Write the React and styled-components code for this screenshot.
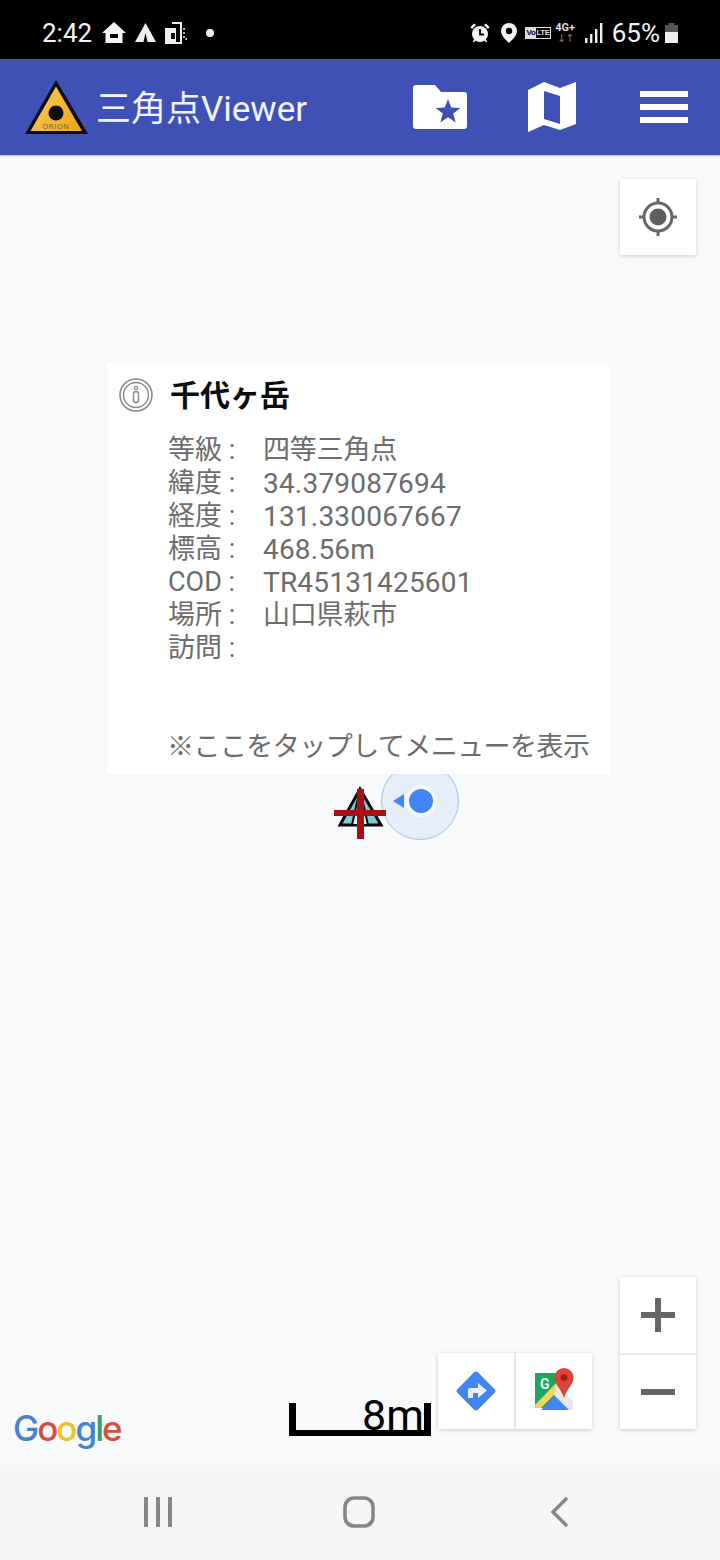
import styled, { createGlobalStyle } from 'styled-components';

const GlobalStyle = createGlobalStyle`
  html, body {
    margin: 0;
    padding: 0;
    width: 720px;
    height: 1560px;
    overflow: hidden;
    background: #f8f9fa;
    font-family: Roboto, "Noto Sans CJK JP", sans-serif;
  }
`;

const Screen = styled.div`
  width: 720px;
  height: 1560px;
  display: flex;
  flex-direction: column;
`;

/* ---------- status bar ---------- */

const StatusBar = styled.div`
  height: 59px;
  flex: none;
  background: #000;
  color: #f4f4f4;
  display: flex;
  align-items: center;
  justify-content: space-between;
  padding: 14px 42px 8px 42px;
  box-sizing: border-box;
  font-size: 26px;
`;

const StatusGroup = styled.div`
  display: flex;
  align-items: center;
`;

const StatusGap = styled.span`
  width: ${(p) => p.$w}px;
  flex: none;
`;

const StatusText = styled.span`
  line-height: 30px;
`;

const HomeIcon = () => (
  <svg width="24" height="22" viewBox="0 0 24 22">
    <path d="M12 0 L24 11 H20.5 V21 H3.5 V11 H0 Z" fill="#f4f4f4" />
    <rect x="8" y="12" width="8" height="4" fill="#000" />
  </svg>
);

const TentIcon = () => (
  <svg width="21" height="19" viewBox="0 0 21 19">
    <path d="M10.5 0 L21 19 H12.5 L10.5 10 L8.5 19 H0 Z" fill="#f0f0f0" />
  </svg>
);

const RotateIcon = () => (
  <svg width="24" height="24" viewBox="0 0 24 24" fill="none" stroke="#eee" strokeWidth="2">
    <path d="M8 2 H17 V22 H11" />
    <path d="M2 8 H11 V22 H2 Z" fill="#eee" />
    <path d="M7 12 H11 V18 H7 Z" fill="#000" stroke="none" />
    <path d="M20 7 V19 M22 17 L23 21" strokeDasharray="2 2" strokeWidth="1.5" />
  </svg>
);

const AlarmIcon = () => (
  <svg width="20" height="20" viewBox="0 0 20 20">
    <circle cx="10" cy="11" r="8" fill="#f4f4f4" />
    <path d="M0.5 4 L4 0.5 L6 2 L2 6 Z M19.5 4 L16 0.5 L14 2 L18 6 Z M3 18 L5 16 L6 17 L4 19.5 Z M17 18 L15 16 L14 17 L16 19.5 Z" fill="#f4f4f4" />
    <path d="M10 6 V11.5 H14" fill="none" stroke="#000" strokeWidth="1.8" />
  </svg>
);

const PinIcon = () => (
  <svg width="16" height="20" viewBox="0 0 16 20">
    <path d="M8 0 A8 8 0 0 1 16 8 C16 13 11 17 8 20 C5 17 0 13 0 8 A8 8 0 0 1 8 0 Z" fill="#f4f4f4" />
    <circle cx="8" cy="8" r="3.2" fill="#000" />
  </svg>
);

const VolteBadge = styled.span`
  height: 10px;
  border: 1px solid #ddd;
  display: flex;
  align-items: center;
  font: 700 8px/10px "Liberation Sans", sans-serif;
  letter-spacing: -0.4px;
  color: #ddd;
  white-space: nowrap;
`;

const VolteInverse = styled.span`
  background: #ddd;
  color: #000;
  padding: 0 1px;
`;

const NetworkType = styled.span`
  display: flex;
  flex-direction: column;
  align-items: center;
  width: 21px;
  font: 700 11px/12px Roboto, sans-serif;
  color: #ddd;
`;

const NetworkArrows = styled.span`
  font: 400 11px/9px "DejaVu Sans", sans-serif;
  letter-spacing: -1px;
  color: #777;
`;

const SignalIcon = () => (
  <svg width="18" height="20" viewBox="0 0 18 20" fill="#f0f0f0">
    <rect x="0" y="15" width="2.4" height="5" />
    <rect x="5" y="11" width="2.4" height="9" />
    <rect x="10" y="6" width="2.4" height="14" />
    <rect x="15" y="0" width="2.4" height="20" />
  </svg>
);

const BatteryIcon = () => (
  <svg width="13" height="20" viewBox="0 0 13 20">
    <path d="M3.5 0 H9.5 V2 H13 V20 H0 V2 H3.5 Z" fill="#555" />
    <path d="M0 9 H13 V20 H0 Z" fill="#eee" />
  </svg>
);

/* ---------- app bar ---------- */

const AppBar = styled.header`
  height: 96px;
  flex: none;
  background: #3f51b5;
  box-shadow: 0 1px 0 #c3cbea, 0 2px 1px #eceef4;
  box-sizing: border-box;
  display: flex;
  align-items: center;
  padding: 0 32px 0 24px;
  position: relative;
  z-index: 1;
`;

const Brand = styled.div`
  display: flex;
  align-items: center;
  gap: 8px;
  flex: 1;
`;

const Title = styled.h1`
  margin: 5px 0 0 -1px;
  font-size: 35px;
  font-weight: 400;
  line-height: 44px;
  color: #f2f5ff;
  font-family: Roboto, "Noto Sans CJK JP", sans-serif;
`;

const AppActions = styled.div`
  display: flex;
  align-items: center;
  gap: 64px;
`;

const Logo = () => (
  <svg width="65" height="56" viewBox="0 0 65 56" style={{ flex: 'none', marginTop: 2 }}>
    <defs>
      <linearGradient id="logoFill" x1="0" y1="0" x2="1" y2="0.6">
        <stop offset="0" stopColor="#fcce5a" />
        <stop offset="1" stopColor="#eeaa20" />
      </linearGradient>
    </defs>
    <path d="M32 0 L64 54 H1 Z" fill="#0c0c14" />
    <path d="M32 6.5 L58 51 H6.5 Z" fill="url(#logoFill)" />
    <circle cx="32" cy="33" r="7.5" fill="#0a0a10" />
    <text x="32" y="49" textAnchor="middle" fontSize="7" letterSpacing="0.8" fill="#6a6040" fontFamily="Liberation Sans, sans-serif">ORION</text>
  </svg>
);

const FolderSvg = styled.svg`
  margin-right: -3px;
`;

const FolderStarIcon = () => (
  <FolderSvg width="54" height="44" viewBox="0 0 54 44">
    <path d="M3 0 H22 L28 7 H51 A3 3 0 0 1 54 10 V41 A3 3 0 0 1 51 44 H3 A3 3 0 0 1 0 41 V3 A3 3 0 0 1 3 0 Z" fill="#fff" />
    <path d="M35 14 L38.2 22.6 L47.4 22.9 L40.2 28.6 L42.7 37.4 L35 32.3 L27.3 37.4 L29.8 28.6 L22.6 22.9 L31.8 22.6 Z" fill="#3f51b5" />
  </FolderSvg>
);

const FoldedMapIcon = () => (
  <svg width="48" height="50" viewBox="0 0 48 50">
    <path d="M0 8 L16 0 L32 6 L48 0 V42 L32 48 L16 43 L0 50 Z" fill="#fff" />
    <path d="M16 9 L32 14 V42 L16 37 Z" fill="#3f51b5" />
  </svg>
);

const Hamburger = styled.div`
  width: 48px;
  height: 32px;
  display: flex;
  flex-direction: column;
  justify-content: space-between;
`;

const HamburgerBar = styled.span`
  height: 6px;
  background: #fff;
`;

/* ---------- map ---------- */

const MapArea = styled.main`
  flex: 1;
  position: relative;
  background: #f8f9fa;
`;

const ControlButton = styled.button`
  width: 76px;
  height: 76px;
  padding: 0;
  border: none;
  background: #fff;
  display: flex;
  align-items: center;
  justify-content: center;
`;

const LocateButton = styled(ControlButton)`
  position: absolute;
  top: 24px;
  right: 24px;
  border-radius: 2px;
  box-shadow: 0 1px 4px rgba(0, 0, 0, 0.18);
`;

const ZoomStack = styled.div`
  position: absolute;
  right: 24px;
  bottom: 36px;
  display: flex;
  flex-direction: column;
  border-radius: 2px;
  box-shadow: 0 1px 4px rgba(0, 0, 0, 0.18);
  & > button + button {
    border-top: 2px solid #e8e8e8;
  }
`;

const ToolbarStack = styled.div`
  position: absolute;
  right: 128px;
  bottom: 36px;
  display: flex;
  border-radius: 2px;
  box-shadow: 0 1px 4px rgba(0, 0, 0, 0.18);
  & > button + button {
    border-left: 2px solid #e8e8e8;
    width: 78px;
  }
`;

const InfoWindow = styled.section`
  position: absolute;
  left: 108px;
  top: 210px;
  width: 502px;
  height: 409px;
  box-sizing: border-box;
  background: #fff;
  padding: 12px 20px 0 11px;
  display: flex;
  flex-direction: column;
`;

const InfoHeader = styled.div`
  display: flex;
  align-items: center;
  gap: 17px;
  height: 36px;
`;

const InfoTitle = styled.h2`
  margin: 0 0 5px;
  font-size: 30px;
  line-height: 36px;
  font-weight: 700;
  color: #0a0a0a;
  font-family: "Noto Sans CJK JP", sans-serif;
`;

const InfoRows = styled.dl`
  margin: 21px 0 0 49px;
  display: grid;
  grid-template-columns: 95px 1fr;
  grid-auto-rows: 33px;
  line-height: 33px;
  color: #6c6c6c;
`;

const InfoLabel = styled.dt`
  margin: 0;
  font-size: 27px;
  white-space: nowrap;
`;

const InfoValue = styled.dd`
  margin: 0;
  white-space: nowrap;
  font-size: ${(p) => (p.$cjk ? 27 : 28)}px;
  letter-spacing: ${(p) => (p.$cjk ? -0.2 : 0.2)}px;
`;

const InfoHint = styled.p`
  margin: 66px 0 0 48px;
  font-size: 27px;
  line-height: 33px;
  color: #6c6c6c;
  white-space: nowrap;
  letter-spacing: -0.55px;
`;

const InfoCircle = () => (
  <svg width="34" height="34" viewBox="0 0 34 34" fill="none" stroke="#8a8a8a">
    <circle cx="17" cy="17" r="16" strokeWidth="1.6" />
    <circle cx="17" cy="17" r="12.5" strokeWidth="1.4" />
    <rect x="14.5" y="13.5" width="5" height="11" rx="2.5" strokeWidth="1.5" />
    <circle cx="17" cy="10" r="1.6" strokeWidth="1.4" />
  </svg>
);

const StationMarker = styled.svg`
  position: absolute;
  left: 332px;
  top: 631px;
`;

const AccuracyCircle = styled.div`
  position: absolute;
  left: 381px;
  top: 607px;
  width: 78px;
  height: 78px;
  box-sizing: border-box;
  border-radius: 50%;
  background: rgba(66, 133, 244, 0.1);
  border: 1px solid #9cc3e4;
  clip-path: inset(12px 0 0 0);
`;

const LocationDot = styled.div`
  position: absolute;
  left: 405px;
  top: 630px;
  width: 32px;
  height: 32px;
  box-sizing: border-box;
  border-radius: 50%;
  background: #4285f4;
  border: 4px solid #f4f8fc;
`;

const HeadingArrow = styled.svg`
  position: absolute;
  left: 393px;
  top: 639px;
`;

const GoogleLogo = styled.div`
  position: absolute;
  left: 13px;
  bottom: 16px;
  font: 500 35px/42px Inter, sans-serif;
  letter-spacing: -2px;
`;

const Letter = styled.span`
  color: ${(p) => p.$color};
`;

const ScaleBar = styled.div`
  position: absolute;
  left: 289px;
  top: 1248px;
  width: 142px;
  height: 33px;
  box-sizing: border-box;
  border: solid #000;
  border-width: 0 7px 6px 7px;
  color: #000;
  font-size: 43px;
  line-height: 24px;
  text-align: right;
`;

const LocateIcon = () => (
  <svg width="44" height="44" viewBox="0 0 44 44" fill="none" stroke="#666" strokeWidth="3">
    <circle cx="22" cy="22" r="14" />
    <circle cx="22" cy="22" r="8.5" fill="#5e5e5e" stroke="none" />
    <path d="M22 3 V9 M22 35 V41 M3 22 H9 M35 22 H41" />
  </svg>
);

const PlusIcon = () => (
  <svg width="36" height="36" viewBox="0 0 36 36" fill="#666">
    <rect x="15" y="1" width="6" height="34" />
    <rect x="1" y="15" width="34" height="6" />
  </svg>
);

const MinusIcon = () => (
  <svg width="36" height="8" viewBox="0 0 36 8" fill="#666">
    <rect x="1" y="1" width="34" height="6" />
  </svg>
);

const DirectionsIcon = () => (
  <svg width="42" height="42" viewBox="0 0 42 42">
    <rect x="6.5" y="6.5" width="29" height="29" rx="3" transform="rotate(45 21 21)" fill="#4285f4" />
    <path d="M13 28 V20 A2 2 0 0 1 15 18 H23 V13 L32 20.5 L23 28 V23 H18 V28 Z" fill="#e8f1fd" />
  </svg>
);

const MapsIcon = () => (
  <svg width="46" height="46" viewBox="0 0 46 46">
    <path d="M4 5 H32 V40 H4 Z" fill="#1fa463" />
    <path d="M4 37 L26 14 L32 18 L10 40 H4 Z" fill="#f2d560" />
    <path d="M10 42 L25 27 L40 42 Z" fill="#4285f4" />
    <path d="M26 15 L42 33 V42 H38 L23 27 Z" fill="#e8e8e8" />
    <text x="9" y="21" fontSize="14" fontWeight="700" fill="#e8f5ee" fontFamily="Roboto, sans-serif">G</text>
    <path d="M33 0 A9.5 9.5 0 0 1 42.5 9.5 C42.5 17 36 20 33 30 C30 20 23.5 17 23.5 9.5 A9.5 9.5 0 0 1 33 0 Z" fill="#db4437" />
    <circle cx="33" cy="9.5" r="3.3" fill="#a51c13" />
  </svg>
);

/* ---------- navigation bar ---------- */

const NavBar = styled.nav`
  height: 95px;
  flex: none;
  background: #f5f5f6;
  display: grid;
  grid-template-columns: repeat(3, 201px);
  justify-content: center;
  justify-items: center;
  align-items: center;
  padding: 0 2px 2px 0;
  box-sizing: border-box;
`;

const RecentsIcon = () => (
  <svg width="30" height="30" viewBox="0 0 30 30" fill="#868686">
    <rect x="1" y="0" width="4" height="30" rx="1" />
    <rect x="13" y="0" width="4" height="30" rx="1" />
    <rect x="25" y="0" width="4" height="30" rx="1" />
  </svg>
);

const HomeNavIcon = () => (
  <svg width="32" height="32" viewBox="0 0 32 32" fill="none" stroke="#868686" strokeWidth="3.6">
    <rect x="2" y="2" width="28" height="28" rx="9" />
  </svg>
);

const BackIcon = () => (
  <svg width="20" height="32" viewBox="0 0 20 32" fill="none" stroke="#868686" strokeWidth="3.4">
    <path d="M17 2 L3 16 L17 30" />
  </svg>
);

const infoRows = [
  ['等級 :', '四等三角点', true],
  ['緯度 :', '34.379087694'],
  ['経度 :', '131.330067667'],
  ['標高 :', '468.56m'],
  ['COD :', 'TR45131425601'],
  ['場所 :', '山口県萩市', true],
  ['訪問 :', ''],
];

const googleLetters = [
  ['G', '#4a80d0'],
  ['o', '#d2503f'],
  ['o', '#e9c22e'],
  ['g', '#4a80d0'],
  ['l', '#35a060'],
  ['e', '#d2503f'],
];

export default function App() {
  return (
    <Screen>
      <GlobalStyle />
      <StatusBar>
        <StatusGroup>
          <StatusText>2:42</StatusText>
          <StatusGap $w={10} />
          <HomeIcon />
          <StatusGap $w={9} />
          <TentIcon />
          <StatusGap $w={8} />
          <RotateIcon />
          <StatusGap $w={13} />
          <svg width="28" height="10" viewBox="0 0 28 10">
            <circle cx="9" cy="5" r="4" fill="#eee" />
          </svg>
        </StatusGroup>
        <StatusGroup>
          <AlarmIcon />
          <StatusGap $w={11} />
          <PinIcon />
          <StatusGap $w={8} />
          <VolteBadge>
            <VolteInverse>Vo</VolteInverse>LTE
          </VolteBadge>
          <StatusGap $w={4} />
          <NetworkType>
            4G+
            <NetworkArrows>↓↑</NetworkArrows>
          </NetworkType>
          <StatusGap $w={9} />
          <SignalIcon />
          <StatusGap $w={9} />
          <StatusText>65%</StatusText>
          <StatusGap $w={5} />
          <BatteryIcon />
        </StatusGroup>
      </StatusBar>

      <AppBar>
        <Brand>
          <Logo />
          <Title>三角点Viewer</Title>
        </Brand>
        <AppActions>
          <FolderStarIcon />
          <FoldedMapIcon />
          <Hamburger>
            <HamburgerBar />
            <HamburgerBar />
            <HamburgerBar />
          </Hamburger>
        </AppActions>
      </AppBar>

      <MapArea>
        <LocateButton>
          <LocateIcon />
        </LocateButton>

        <InfoWindow>
          <InfoHeader>
            <InfoCircle />
            <InfoTitle>千代ヶ岳</InfoTitle>
          </InfoHeader>
          <InfoRows>
            {infoRows.map(([label, value, cjk]) => (
              <div key={label} style={{ display: 'contents' }}>
                <InfoLabel>{label}</InfoLabel>
                <InfoValue $cjk={cjk}>{value}</InfoValue>
              </div>
            ))}
          </InfoRows>
          <InfoHint>※ここをタップしてメニューを表示</InfoHint>
        </InfoWindow>

        <AccuracyCircle />
        <StationMarker width="56" height="56" viewBox="0 0 56 56">
          <path d="M28 3 L49 39 H8 Z" fill="#7ecad0" stroke="#0a0a0a" strokeWidth="3" />
          <path d="M28 3 L20 39 H36 Z" fill="#d8eef0" stroke="#0a0a0a" strokeWidth="2" />
          <rect x="25" y="3" width="7" height="50" fill="#a60f14" />
          <rect x="2" y="24" width="52" height="6" fill="#a60f14" />
        </StationMarker>
        <LocationDot />
        <HeadingArrow width="12" height="14" viewBox="0 0 12 14">
          <path d="M0 7 L11 0 V14 Z" fill="#4285f4" />
        </HeadingArrow>

        <GoogleLogo>
          {googleLetters.map(([letter, color], i) => (
            <Letter key={i} $color={color}>
              {letter}
            </Letter>
          ))}
        </GoogleLogo>

        <ScaleBar>8m</ScaleBar>

        <ToolbarStack>
          <ControlButton>
            <DirectionsIcon />
          </ControlButton>
          <ControlButton>
            <MapsIcon />
          </ControlButton>
        </ToolbarStack>

        <ZoomStack>
          <ControlButton>
            <PlusIcon />
          </ControlButton>
          <ControlButton>
            <MinusIcon />
          </ControlButton>
        </ZoomStack>
      </MapArea>

      <NavBar>
        <RecentsIcon />
        <HomeNavIcon />
        <BackIcon />
      </NavBar>
    </Screen>
  );
}
